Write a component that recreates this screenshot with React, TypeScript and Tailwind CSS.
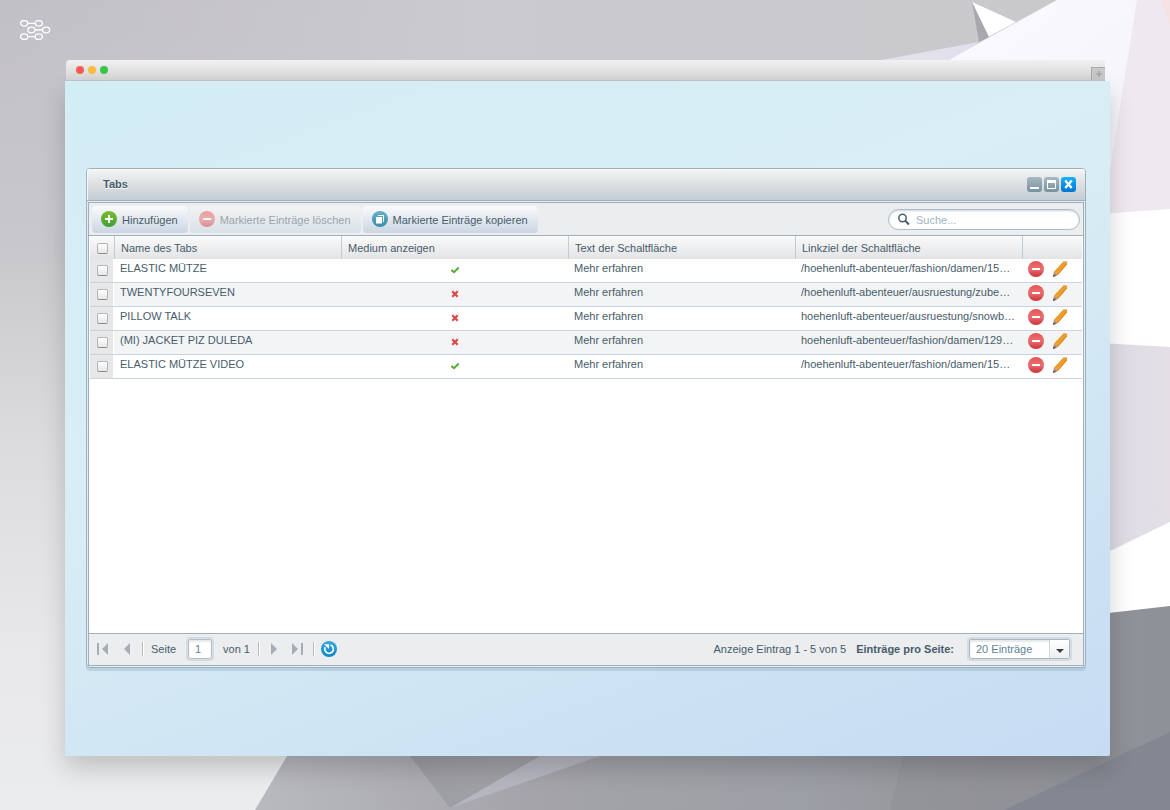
import { useState } from 'react';

const initialRows = [
  { id: 1, name: 'ELASTIC MÜTZE', media: true, text: 'Mehr erfahren', link: '/hoehenluft-abenteuer/fashion/damen/15…' },
  { id: 2, name: 'TWENTYFOURSEVEN', media: false, text: 'Mehr erfahren', link: '/hoehenluft-abenteuer/ausruestung/zube…' },
  { id: 3, name: 'PILLOW TALK', media: false, text: 'Mehr erfahren', link: 'hoehenluft-abenteuer/ausruestung/snowb…' },
  { id: 4, name: '(MI) JACKET PIZ DULEDA', media: false, text: 'Mehr erfahren', link: 'hoehenluft-abenteuer/fashion/damen/129…' },
  { id: 5, name: 'ELASTIC MÜTZE VIDEO', media: true, text: 'Mehr erfahren', link: '/hoehenluft-abenteuer/fashion/damen/15…' },
];

const columns = ['Name des Tabs', 'Medium anzeigen', 'Text der Schaltfläche', 'Linkziel der Schaltfläche'];

const checkboxClass =
  'block w-[11px] h-[11px] mx-auto appearance-none rounded-[2px] border border-[#b4b4b4] border-b-[#8e8e8e] bg-linear-to-b from-white to-[#e6e6e6] checked:bg-[#189eff] checked:bg-none';

const toolbarButtonClass =
  'h-[27px] flex items-center gap-[5px] pl-[9px] pr-[10px] rounded-[4px] bg-linear-to-b from-[#fafafb] to-[#cbd6e3] disabled:opacity-50';

function Backdrop() {
  return (
    <svg className="absolute inset-0 w-full h-full" viewBox="0 0 1170 810" preserveAspectRatio="none" aria-hidden="true">
      <defs>
        <linearGradient id="bgLeft" x1="0" y1="0" x2="0" y2="1">
          <stop offset="0" stopColor="#c2c0c7" />
          <stop offset="0.3" stopColor="#c8c7cb" />
          <stop offset="0.55" stopColor="#dcdcde" />
          <stop offset="0.8" stopColor="#e8e8ea" />
          <stop offset="1" stopColor="#ebeced" />
        </linearGradient>
        <linearGradient id="bgTop" x1="0" y1="0" x2="1" y2="0">
          <stop offset="0" stopColor="#c9c8cc" stopOpacity="0" />
          <stop offset="0.4" stopColor="#cbcacf" />
          <stop offset="1" stopColor="#c9c8cb" />
        </linearGradient>
        <linearGradient id="bgFloor" x1="255" y1="0" x2="1170" y2="0" gradientUnits="userSpaceOnUse">
          <stop offset="0" stopColor="#b9b9c0" />
          <stop offset="0.3" stopColor="#a4a4aa" />
          <stop offset="0.6" stopColor="#9c9fa5" />
          <stop offset="0.8" stopColor="#939499" />
          <stop offset="1" stopColor="#8e9198" />
        </linearGradient>
        <linearGradient id="bgPaper" x1="0" y1="0" x2="0.3" y2="1">
          <stop offset="0" stopColor="#fbfafd" />
          <stop offset="1" stopColor="#ededf8" />
        </linearGradient>
        <linearGradient id="bgFold" x1="0" y1="0" x2="1" y2="0">
          <stop offset="0" stopColor="#dddbe5" />
          <stop offset="1" stopColor="#e4dfe6" />
        </linearGradient>
        <linearGradient id="bgCrease" x1="0" y1="0" x2="1" y2="0">
          <stop offset="0" stopColor="#94949b" stopOpacity="0.7" />
          <stop offset="1" stopColor="#94949b" stopOpacity="0" />
        </linearGradient>
      </defs>
      <rect width="1170" height="810" fill="url(#bgLeft)" />
      <rect width="1170" height="120" fill="url(#bgTop)" />
      <path d="M948 60 1057 0H1170V640H1040V60Z" fill="url(#bgPaper)" />
      <path d="M876 61 979 42 948 61Z" fill="#e2e0ed" />
      <path d="M972 2 1016 22 988 37Z" fill="#fff" />
      <path d="M972 2 989 37 979 42Z" fill="#aaa8af" />
      <path d="M1137 0H1170V210L1110 216V170Z" fill="#eee9f0" />
      <path d="M1161 0H1170V26Z" fill="#f4e3e2" />
      <path d="M1100 214 1170 209V347L1100 344Z" fill="#fff" />
      <path d="M1100 343 1170 347V522L1100 556Z" fill="url(#bgFold)" />
      <path d="M1100 556 1170 522V606L1100 614Z" fill="#fff" />
      <path d="M287 756 1100 614 1170 606V810H255Z" fill="url(#bgFloor)" />
      <path d="M410 756H600L450 808Z" fill="url(#bgCrease)" />
      <path d="M450 808 540 756H600Z" fill="#bcbbc7" opacity="0.8" />
      <path d="M903 756 890 810H1004L1140 746Z" fill="#8f9095" opacity="0.5" />
      <path d="M1170 732V810H1004Z" fill="#838791" />
    </svg>
  );
}

function Logo() {
  return (
    <svg className="w-8 h-5" viewBox="0 0 32 20" fill="none" stroke="#fff" strokeWidth="1.3" aria-label="Logo">
      <ellipse cx="4.2" cy="3.3" rx="3.6" ry="2.8" />
      <ellipse cx="18.8" cy="3.3" rx="3.6" ry="2.8" />
      <ellipse cx="11.4" cy="10" rx="3.6" ry="2.8" />
      <ellipse cx="26.1" cy="10" rx="3.6" ry="2.8" />
      <ellipse cx="4.2" cy="16.7" rx="3.6" ry="2.8" />
      <ellipse cx="18.8" cy="16.7" rx="3.6" ry="2.8" />
      <path d="M7.8 3.3h7.4M15 10h7.5M7.8 16.7h7.4" />
    </svg>
  );
}

function PlusIcon() {
  return (
    <svg className="w-4 h-4" viewBox="0 0 16 16" aria-hidden="true">
      <defs>
        <linearGradient id="green" x1="0" y1="0" x2="0" y2="1">
          <stop offset="0" stopColor="#79bd2c" />
          <stop offset="1" stopColor="#3d9f33" />
        </linearGradient>
      </defs>
      <circle cx="8" cy="8" r="8" fill="url(#green)" />
      <path d="M8 4v8M4 8h8" stroke="#fff" strokeWidth="2" />
    </svg>
  );
}

function MinusIcon() {
  return (
    <svg className="w-4 h-4" viewBox="0 0 16 16" aria-hidden="true">
      <defs>
        <linearGradient id="red" x1="0" y1="0" x2="0" y2="1">
          <stop offset="0" stopColor="#eb5254" />
          <stop offset="0.5" stopColor="#e86f72" />
          <stop offset="1" stopColor="#cf3034" />
        </linearGradient>
      </defs>
      <circle cx="8" cy="8" r="8" fill="url(#red)" />
      <path d="M4 8h8" stroke="#fff" strokeWidth="2" />
    </svg>
  );
}

function CopyIcon() {
  return (
    <svg className="w-4 h-4" viewBox="0 0 16 16" aria-hidden="true">
      <defs>
        <linearGradient id="teal" x1="0" y1="0" x2="0" y2="1">
          <stop offset="0" stopColor="#64afc7" />
          <stop offset="1" stopColor="#3b8faa" />
        </linearGradient>
      </defs>
      <circle cx="8" cy="8" r="8" fill="url(#teal)" />
      <path d="M6 4.5h5.5V11" fill="none" stroke="#fff" strokeWidth="1" />
      <path d="M4 6h6v6.5H4Z" fill="#fff" />
    </svg>
  );
}

function PencilIcon() {
  return (
    <svg className="w-4 h-4" viewBox="0 0 16 16" aria-hidden="true">
      <path d="M11.5 0.2 15.2 0.6 15 3.6 6 14 2 10.6Z" fill="#eb9e30" />
      <path d="M14.8 3 5.6 13.6" stroke="#e2871b" strokeWidth="1" />
      <path d="M2 10.6 6 14 1 16Z" fill="#b48a72" />
      <path d="M1.4 13.4 4.2 14.8 1 16Z" fill="#6b4a42" />
    </svg>
  );
}

function RefreshIcon() {
  return (
    <svg className="w-4 h-4" viewBox="0 0 16 16" aria-hidden="true">
      <defs>
        <linearGradient id="blue" x1="0" y1="0" x2="0" y2="1">
          <stop offset="0" stopColor="#3aa9dc" />
          <stop offset="1" stopColor="#0a86c8" />
        </linearGradient>
      </defs>
      <circle cx="8" cy="8" r="8" fill="url(#blue)" />
      <path d="M9.5 4A4.3 4.3 0 1 1 4.2 6.2" fill="none" stroke="#fff" strokeWidth="1.7" />
      <path d="M3 3.2H8V8L6.2 6.2Z" fill="#fff" />
    </svg>
  );
}

function MediaIcon({ on }) {
  return (
    <svg className="block w-2 h-2 mx-auto" viewBox="0 0 8 8" fill="none" role="img" aria-label={on ? 'Ja' : 'Nein'}>
      {on ? (
        <path d="M0.3 4 3 6.2 7.8 1.5" stroke="#57ae35" strokeWidth="2" />
      ) : (
        <path d="M1.3 1.3 6.7 6.7M6.7 1.3 1.3 6.7" stroke="#e04545" strokeWidth="2.2" />
      )}
    </svg>
  );
}

function PagerIcon({ d }) {
  return (
    <svg className="block w-3 h-3" viewBox="0 0 12 12" fill="#a5aeb7" aria-hidden="true">
      <path d={d} />
    </svg>
  );
}

function Separator() {
  return <span className="w-[2px] h-[14px] bg-[#b3bcc5] border-r border-white" />;
}

export default function App() {
  const [selected, setSelected] = useState([]);
  const [search, setSearch] = useState('');
  const [page, setPage] = useState('1');

  const rows = initialRows.filter((row) => row.name.toLowerCase().includes(search.toLowerCase()));

  const toggle = (id) => {
    setSelected((prev) => (prev.includes(id) ? prev.filter((x) => x !== id) : [...prev, id]));
  };

  return (
    <div className="relative min-h-screen flex flex-col font-['Liberation_Sans',Arial,sans-serif] text-[11px] leading-4 text-[#475c6a]">
      <Backdrop />

      <header className="relative h-[60px] p-5">
        <Logo />
      </header>

      {/* Browser window */}
      <div className="relative flex-1 flex flex-col ml-[65px] mr-[60px] mb-[54px]">
        <div className="h-[21px] ml-px mr-[5px] pl-[10px] flex items-center gap-1 rounded-t-[4px] bg-linear-to-b from-[#f1f1f1] to-[#d5d5d5] border-b border-[#c4c4c6]">
          <span className="w-2 h-2 rounded-full bg-[#fc5b57]" />
          <span className="w-2 h-2 rounded-full bg-[#fdbc40]" />
          <span className="w-2 h-2 rounded-full bg-[#34c748]" />
          <button type="button" aria-label="Neuer Tab" className="ml-auto self-end w-[14px] h-[13px] flex items-center justify-center bg-[#c8c8c8] border-l border-t border-[#aaa]">
            <svg className="w-2 h-2" viewBox="0 0 8 8" stroke="#989898" aria-hidden="true">
              <path d="M4 1v6M1 4h6" />
            </svg>
          </button>
        </div>

        <main className="flex-1 flex flex-col pt-[87px] pb-[88px] pl-[21px] pr-6 rounded-b-[2px] bg-linear-160 from-[#d3edf6] via-[#d9eef4] via-40% to-[#c5dcf3] shadow-[0_12px_24px_rgba(0,0,0,0.18)]">
          {/* Tabs dialog */}
          <section className="flex-1 flex flex-col rounded-[4px] border border-[#9eb0bd] bg-[#e6edf2] shadow-[0_3px_0_rgba(100,130,150,0.22)]">
            <div className="h-8 flex items-center pl-4 pr-[9px] rounded-t-[3px] bg-linear-to-b from-[#f4f4f4] to-[#c4ccd2] border-b border-[#9eb0bd] shadow-[inset_1px_1px_0_#f8f8f8]">
              <h1 className="flex-1 pb-[2px] font-bold [text-shadow:0_1px_0_#fff]">Tabs</h1>
              <div className="flex gap-[2px]">
                <button type="button" aria-label="Minimieren" className="w-[15px] h-[15px] rounded-[3px] bg-linear-to-b from-[#a9b8c3] to-[#7890a0]">
                  <svg viewBox="0 0 15 15" aria-hidden="true"><path d="M3 10h9v2H3Z" fill="#fff" /></svg>
                </button>
                <button type="button" aria-label="Maximieren" className="w-[15px] h-[15px] rounded-[3px] bg-linear-to-b from-[#a9b8c3] to-[#7890a0]">
                  <svg viewBox="0 0 15 15" aria-hidden="true"><path fillRule="evenodd" d="M3 3h9v9H3ZM4 6v5h7V6Z" fill="#fff" /></svg>
                </button>
                <button type="button" aria-label="Schließen" className="w-[15px] h-[15px] rounded-[3px] bg-linear-to-b from-[#19b0ff] to-[#0377d0]">
                  <svg viewBox="0 0 15 15" aria-hidden="true"><path d="M4.3 3.5 10.7 11M10.7 3.5 4.3 11" stroke="#fff" strokeWidth="2.4" /></svg>
                </button>
              </div>
            </div>

            <div className="flex-1 flex flex-col m-px border border-[#9eb0bd] bg-white">
              {/* Toolbar */}
              <div className="h-[33px] flex items-center gap-[2px] px-[3px] bg-[#ebedef] border-b border-[#9eb0bd]">
                <button type="button" className={toolbarButtonClass}>
                  <PlusIcon />
                  <span className="pt-[2px]">Hinzufügen</span>
                </button>
                <button type="button" disabled={selected.length === 0} className={toolbarButtonClass}>
                  <MinusIcon />
                  <span className="pt-[2px]">Markierte Einträge löschen</span>
                </button>
                <button type="button" className={toolbarButtonClass}>
                  <CopyIcon />
                  <span className="pt-[2px]">Markierte Einträge kopieren</span>
                </button>
                <label className="ml-auto w-48 h-[21px] flex items-center gap-[6px] pl-2 pr-2 rounded-full border border-[#aebdc9] bg-white shadow-[inset_0_1px_2px_#c9d2da]">
                  <svg className="w-[13px] h-[13px]" viewBox="0 0 13 13" fill="none" stroke="#4c5d6b" aria-hidden="true">
                    <circle cx="5.5" cy="5" r="3.7" strokeWidth="1.5" />
                    <path d="M8.2 7.8 12 11.5" strokeWidth="2" />
                  </svg>
                  <input
                    type="text"
                    aria-label="Suche"
                    value={search}
                    onChange={(e) => setSearch(e.target.value)}
                    placeholder="Suche..."
                    className="flex-1 min-w-0 pt-[2px] outline-none placeholder:text-[#9fb4c4]"
                  />
                </label>
              </div>

              {/* Grid */}
              <div className="flex-1 px-px">
                <table className="w-full table-fixed border-separate border-spacing-0 text-left">
                  <thead>
                    <tr className="h-[23px] bg-linear-to-b from-[#fafafa] to-[#e3e4e6]">
                      <th className="w-6 p-0 pt-[2px]">
                        <input
                          type="checkbox"
                          aria-label="Alle auswählen"
                          className={checkboxClass}
                          checked={selected.length === initialRows.length}
                          onChange={(e) => setSelected(e.target.checked ? initialRows.map((r) => r.id) : [])}
                        />
                      </th>
                      {columns.map((col) => (
                        <th key={col} className="p-0 pl-[6px] font-normal border-l border-[#c3cbd2]">{col}</th>
                      ))}
                      <th className="w-[60px] p-0 border-l border-[#c3cbd2]" aria-label="Aktionen" />
                    </tr>
                  </thead>
                  <tbody>
                    {rows.map((row) => (
                      <tr key={row.id} className="h-6 even:bg-[#f3f4f6]">
                        <td className="p-0 border-b border-[#d0d3d6] bg-linear-to-r from-[#e6e7e9] from-[23px] to-white to-[23px]">
                          <input
                            type="checkbox"
                            aria-label={row.name}
                            className={checkboxClass}
                            checked={selected.includes(row.id)}
                            onChange={() => toggle(row.id)}
                          />
                        </td>
                        <td className="p-0 pl-[6px] pb-[6px] border-b border-[#c9d3dd]">{row.name}</td>
                        <td className="p-0 pb-[2px] border-b border-[#c9d3dd]">
                          <MediaIcon on={row.media} />
                        </td>
                        <td className="p-0 pl-[6px] pb-[6px] border-b border-[#c9d3dd]">{row.text}</td>
                        <td className="p-0 pl-[6px] pb-[6px] border-b border-[#c9d3dd] whitespace-nowrap">{row.link}</td>
                        <td className="p-0 pb-[3px] border-b border-[#c9d3dd]">
                          <div className="flex gap-2 pl-[6px]">
                            <button type="button" aria-label="Löschen"><MinusIcon /></button>
                            <button type="button" aria-label="Bearbeiten"><PencilIcon /></button>
                          </div>
                        </td>
                      </tr>
                    ))}
                  </tbody>
                </table>
              </div>

              {/* Paging */}
              <div className="h-8 flex items-center justify-between pl-2 pr-3 pb-[2px] bg-[#ebedef] border-t border-[#9eb0bd]">
                <div className="flex items-center">
                  <button type="button" aria-label="Erste Seite"><PagerIcon d="M0 0h2v12H0ZM11 0v12L5 6Z" /></button>
                  <button type="button" aria-label="Vorherige Seite" className="ml-3"><PagerIcon d="M9 0v12L3 6Z" /></button>
                  <span className="w-[9px]" />
                  <Separator />
                  <label htmlFor="page" className="ml-[7px]">Seite</label>
                  <input
                    id="page"
                    type="text"
                    value={page}
                    onChange={(e) => setPage(e.target.value)}
                    className="w-6 h-5 ml-3 mr-[11px] pl-[6px] rounded-[2px] border border-[#b5bfc9] bg-white text-[#5f8299] outline-2 outline-[#d5dbe2] shadow-[inset_0_2px_2px_#e8e8e8]"
                  />
                  <span>von 1</span>
                  <span className="w-2" />
                  <Separator />
                  <button type="button" aria-label="Nächste Seite" className="ml-2"><PagerIcon d="M3 0v12L9 6Z" /></button>
                  <button type="button" aria-label="Letzte Seite" className="ml-3 mr-[9px]"><PagerIcon d="M0 0v12L6 6ZM9 0h2v12H9Z" /></button>
                  <Separator />
                  <button type="button" aria-label="Aktualisieren" className="ml-[6px]"><RefreshIcon /></button>
                </div>
                <div className="flex items-center">
                  <span>Anzeige Eintrag 1 - 5 von 5</span>
                  <label htmlFor="pageSize" className="ml-[10px] mr-[15px] font-bold">Einträge pro Seite:</label>
                  <div className="relative w-[101px] h-5 mr-px rounded-[2px] bg-white outline-2 outline-[#d5dbe2]">
                    <select
                      id="pageSize"
                      className="block w-full h-5 pl-[6px] appearance-none rounded-[2px] border border-[#a9b7c4] text-[#5f8299] shadow-[inset_0_2px_2px_#e4e8ea]"
                    >
                      <option>20 Einträge</option>
                      <option>40 Einträge</option>
                      <option>60 Einträge</option>
                    </select>
                    <span className="absolute right-px top-px w-5 h-[18px] flex items-center justify-center pt-px bg-linear-to-b from-white to-[#eceef0] border-l border-[#cfd6dc] pointer-events-none">
                      <svg className="w-2 h-2" viewBox="0 0 8 8" fill="#33444f" aria-hidden="true">
                        <path d="M0 4h8L4 8Z" />
                      </svg>
                    </span>
                  </div>
                </div>
              </div>
            </div>
          </section>
        </main>
      </div>
    </div>
  );
}
